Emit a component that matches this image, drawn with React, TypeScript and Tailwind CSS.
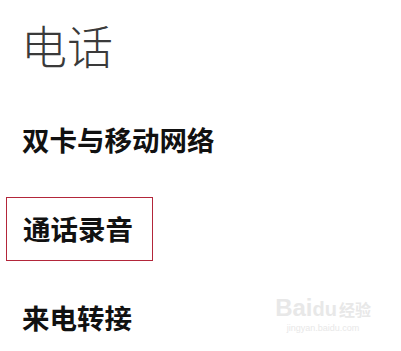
const cjk = '"Noto Sans CJK SC", "Noto Sans", sans-serif';

function Row({ label, boxed }: { label: string; boxed?: boolean }) {
  return (
    <div
      className={
        boxed
          ? 'ml-[6px] flex h-[64px] w-[147px] items-center border border-[#b3263a] pl-[16px]'
          : 'flex h-[64px] items-center pl-[22px]'
      }
    >
      <span className="text-[27.5px] font-bold leading-none text-[#111]">{label}</span>
    </div>
  );
}

export default function App() {
  return (
    <div
      className="relative h-[351px] w-[401px] overflow-hidden bg-white"
      style={{ fontFamily: cjk }}
    >
      <div className="flex h-[88px] items-center pl-[21px]">
        <h1 className="text-[46px] font-light leading-none text-[#3a3a3a]">电话</h1>
      </div>
      <div className="mt-[20px]">
        <Row label="双卡与移动网络" />
      </div>
      <div className="mt-[25px]">
        <Row label="通话录音" boxed />
      </div>
      <div className="mt-[25px]">
        <Row label="来电转接" />
      </div>

      {/* baidu jingyan watermark */}
      <div className="pointer-events-none absolute right-[30px] top-[296px] flex flex-col items-center text-[#e8e8e8]">
        <span className="text-[24px] font-bold leading-none" style={{ fontFamily: '"Liberation Sans", "Noto Sans CJK SC", sans-serif' }}>
          Bai<span className="text-[20px]">du</span>
          <span className="ml-[2px] text-[16px]">经验</span>
        </span>
        <span className="mt-[4px] text-[9px] leading-none" style={{ fontFamily: '"Liberation Sans", sans-serif' }}>
          jingyan.baidu.com
        </span>
      </div>
    </div>
  );
}
